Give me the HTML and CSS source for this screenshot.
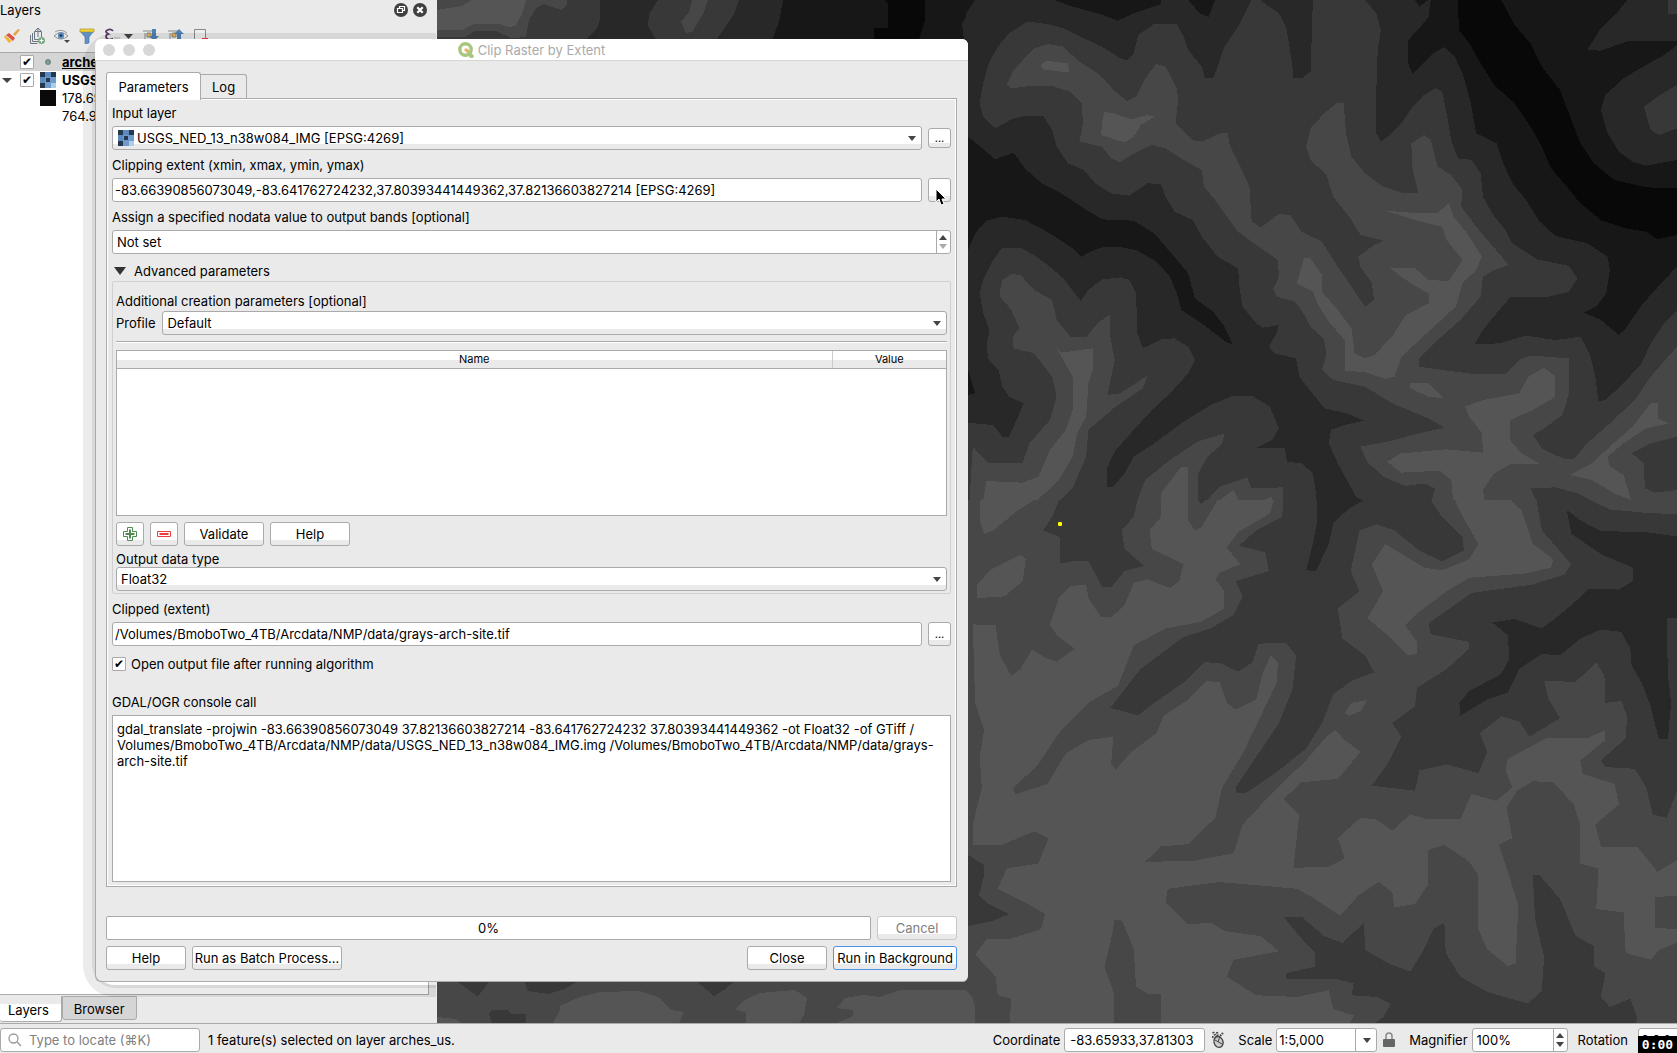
FILE: index.html
```html
<!DOCTYPE html>
<html lang="en">
<head>
<meta charset="utf-8">
<title>Clip Raster by Extent</title>
<link rel="stylesheet" href="styles.css">
</head>
<body>
<svg class="defs" aria-hidden="true">
  <symbol id="raster" viewBox="0 0 16 16"><path fill="#6f9bcc" d="M0 0h16v16H0z"/><path fill="#26384c" d="M0 0h5v5H0zM11 0h5v5h-5zM6 6h4v4H6zM0 11h5v5H0z"/><path fill="#aecbe8" d="M11 11h5v5h-5z"/><path fill="#4f7fb5" d="M5 0h6v5H5zM0 5h5v6H0z" opacity=".6"/></symbol>
</svg>
<div class="workspace">
  <aside class="dock">
    <header class="dock-head">
      <h2>Layers</h2>
      <button class="round" aria-label="Float panel"><svg viewBox="0 0 14 14"><circle cx="7" cy="7" r="7" fill="#404040"/><path d="M5.500 5V3.500h5v4H9M3.500 5.500h5v4h-5z" fill="none" stroke="#fff" stroke-width="1.200"/></svg></button>
      <button class="round" aria-label="Close panel"><svg viewBox="0 0 14 14"><circle cx="7" cy="7" r="7" fill="#404040"/><path d="M4.300 4.300l5.400 5.400M9.700 4.300l-5.400 5.400" stroke="#fff" stroke-width="2.200"/></svg></button>
    </header>
    <div class="tools">
      <button aria-label="Open layer styling"><svg viewBox="0 0 16 16"><path d="M9 6l5-5 2 1-5 6z" fill="#e8a33d"/><path d="M5 5l6 5-2 3-7-6z" fill="#d9534a"/><path d="M1 7l7 6-3 2-5-6z" fill="#f0b63c"/></svg></button>
      <button aria-label="Add group"><svg viewBox="0 0 16 16"><path d="M5.500 3.500h7v8h-7zM3.500 5v8.500h7M1.500 7v8.500h7" fill="none" stroke="#6c7680"/><path d="M9 0v9M9 0l-3 3M9 0l3 3" stroke="#6c7680" fill="none"/><circle cx="12.500" cy="12.500" r="3.500" fill="#7ba884"/><path d="M12.500 10.500v4M10.500 12.500h4" stroke="#fff"/></svg></button>
      <button aria-label="Manage map themes"><svg viewBox="0 0 16 16"><path d="M0 8q7-7 14 0q-7 6-14 0z" fill="#eee" stroke="#8c8c8c"/><circle cx="7" cy="7.500" r="3.200" fill="#5d8fc4"/><circle cx="7" cy="7.500" r="1.300" fill="#234"/><path d="M1 4q6-4 12 1" fill="none" stroke="#999"/><path d="M10 12h6l-3 3z" fill="#444"/></svg></button>
      <button aria-label="Filter legend"><svg viewBox="0 0 16 16"><path d="M1 3h14l-5 6v6l-4 1V9z" fill="#5f91c6" stroke="#456f9c" stroke-width=".6"/><path d="M1 1h14v3H1z" fill="#f2d532" stroke="#99852a" stroke-width=".6"/></svg></button>
      <button class="menu" aria-label="Filter by expression"><svg viewBox="0 0 30 16"><path d="M9 3Q7 .5 3.500 2t1 4Q1 7 2.500 10T9 10.500" fill="none" stroke="#5a3a68" stroke-width="1.800"/><path d="M10 9h6v6h-6z" fill="#ccc"/><path d="M20 6h9l-4.500 5z" fill="#444"/></svg></button>
      <button aria-label="Expand all"><svg viewBox="0 0 16 16"><path d="M0 3h10M2 5v11M4 5h4v4H4z" stroke="#888" fill="#f3b53d"/><path d="M9 1h4v7h3l-5 5-5-5h3z" fill="#4e81b4"/></svg></button>
      <button aria-label="Collapse all"><svg viewBox="0 0 16 16"><path d="M0 3h10M2 5v11M4 5h4v4H4z" stroke="#888" fill="#f3b53d"/><path d="M9 14V6H6l5-5 5 5h-3v8z" fill="#4e81b4"/></svg></button>
      <button aria-label="Remove layer"><svg viewBox="0 0 16 16"><path d="M1.500 1.500h11v11h-11z" fill="#eee" stroke="#888"/><path d="M9 10h6v3H9z" fill="#e5383b"/></svg></button>
    </div>
    <ul class="tree">
      <li class="selected"><span class="twig"></span><input type="checkbox" checked aria-label="arches_us"><svg class="sym" viewBox="0 0 16 16"><circle cx="8" cy="8" r="2.500" fill="#7b9a98" stroke="#6a7f80"/></svg><b><u>arches_us</u></b></li>
      <li><span class="twig open"></span><input type="checkbox" checked aria-label="USGS_NED_13"><svg class="sym"><use href="#raster"/></svg><b>USGS_NED_13</b></li>
      <li class="leaf"><span class="swatch black"></span>178.695</li>
      <li class="leaf"><span class="swatch"></span>764.944</li>
    </ul>
    <nav class="dock-tabs"><button class="on">Layers</button><button>Browser</button></nav>
    <div class="shade"></div>
  </aside>

  <main class="map">
    <svg viewBox="437 0 1240 1023" preserveAspectRatio="xMinYMin slice" shape-rendering="crispEdges">
      <path class="l3" d="M437 0h1240v1023H437z"/>
      <!-- northern strip -->
      <path class="l4" d="M437 0H567V4L562 10L555 8L544 4L536 8L529 20L526 37L511 38L496 31H475L465 37H437z"/>
      <path class="l5" d="M437 10L462 6L472 0H526L522 14L515 26L508 27L500 24H474L462 30H437z"/>
      <path class="l2" d="M600 0H658L649 14L648 26L656 40H586L597 28L600 20zM739 0H968V40H716L726 26L734 14z"/>
      <path class="l4" d="M692 0H708L704 12L697 24L692 32L686 33L681 22L689 12z"/>
      <path class="l1" d="M783 0H968V14L962 24L964 40H772L779 22z"/>
      <path class="l0" d="M884 0H925V20L919 40H874V28H888V4z"/>
      <!-- southern strip -->
      <path class="l4" d="M437 975H970V1023H437z"/>
      <path class="l5" d="M553 1023L560 1010V1006L580 997L600 992L640 991L660 998L671 1010L684 1012L679 1023zM746 1023V1013L735 1009L745 1000L760 993L795 990L807 998L804 1015L799 1023zM837 1023L853 1016V1010L837 1008L845 998L863 995L880 997L900 990H968V1023zM437 1017L455 1019L462 1023H437z"/>
      <path class="l3" d="M455 980H490L483 990L477 996L466 988zM524 980H580L565 989L548 994L528 991zM695 980H736L724 990L714 996zM489 1014L492 1010H508L511 1014H526V1023H492z"/>
      <!-- upper relief sheet -->
      <svg x="966" y="0" width="711" height="501" viewBox="0 0 1568 1503" preserveAspectRatio="none">
        <path class="l3" d="M0 0h1568v1503H0z"/>
        <path class="l2" d="M0 0L630 0L600 80L570 140L555 200L545 235L527 235L520 200L490 150L480 110L465 72L415 72L380 105L370 160L355 182L340 175L300 140L260 115L215 85L180 72L135 65L95 100L70 140L50 190L38 250L30 310L38 350L65 385L100 358L130 347L170 347L190 390L200 440L225 490L260 510L285 550L320 580L360 587L400 550L430 552L440 590L460 635L500 660L520 710L555 770L600 805L603 860L610 920L640 970L655 983L690 975L685 1000L668 1040L680 1060L728 1075L735 1130L770 1190L790 1225L840 1240L878 1262L835 1275L805 1290L800 1330L820 1390L840 1440L860 1490L878 1505L840 1525L828 1560L775 1560L772 1480L765 1420L740 1390L708 1385L703 1345L640 1343L675 1320L690 1285L670 1220L630 1187L590 1187L540 1215L480 1265L410 1335L370 1370L350 1420L325 1460L312 1460L312 1400L330 1350L370 1290L410 1230L450 1180L490 1120L505 1080L490 1040L460 1015L430 1018L390 1045L378 1000L375 880L360 840L340 832L300 838L270 870L253 903L240 880L215 835L180 795L150 765L120 743L80 743L60 780L38 840L30 880L38 940L52 990L45 1040L50 1080L72 1110L80 1160L95 1190L127 1210L115 1250L95 1310L80 1310L60 1275L0 1268z"/>
        <path class="l2" d="M648 0L765 0L760 215L740 235L722 233L718 180L706 80L690 40L660 12zM880 0L905 40L915 90L908 150L905 270L905 400L915 425L930 410L960 370L985 320L1010 285L1035 265L1050 275L1060 340L1070 420L1085 475L1115 480L1135 520L1140 590L1165 650L1190 690L1205 730L1260 778L1330 798L1348 835L1330 875L1285 890L1200 892L1170 940L1140 990L1122 1033L1175 1030L1235 1007L1300 1020L1355 1010L1375 1060L1388 1130L1395 1205L1410 1200L1450 1150L1490 1090L1510 1030L1540 970L1568 930L1568 0z"/>
        <path class="l1" d="M195 0L230 18L290 40L335 62L370 40L430 12L430 0zM490 0L515 40L535 50L545 15L550 0zM0 0L20 0L0 40zM990 0L1020 0L1000 20zM5 410L40 450L65 478L105 458L130 505L165 548L210 580L260 625L300 658L370 662L415 700L450 755L490 820L505 895L545 935L570 980L588 1032L575 1028L530 980L475 930L465 880L450 830L420 785L375 750L345 742L300 742L270 758L255 770L235 745L185 700L130 660L80 650L45 662L20 700L5 750zM5 1110L20 1180L5 1185z"/>
        <path class="l1" d="M1025 0L1020 50L1000 85L975 120L975 190L985 222L1000 200L1030 160L1055 142L1078 170L1095 220L1112 300L1125 400L1170 430L1185 490L1205 550L1235 600L1265 665L1300 708L1370 730L1415 770L1420 810L1412 880L1390 920L1362 938L1400 960L1440 1005L1455 985L1490 915L1540 840L1568 800L1568 0z"/>
        <path class="l2" d="M1458 0L1435 40L1400 85L1370 150L1400 152L1460 123L1568 123L1568 0zM1568 135L1540 165L1500 195L1450 235L1410 285L1400 330L1415 400L1440 455L1470 485L1500 497L1540 487L1568 480z"/>
        <path class="l3" d="M1568 255L1525 290L1495 320L1510 390L1530 405L1568 385zM1548 0h20v42h-20z"/>
        <path class="l0" d="M1085 0L1087 90L1110 130L1135 190L1165 255L1210 310L1245 380L1270 440L1290 505L1325 560L1355 610L1400 660L1455 685L1500 695L1525 718L1568 705L1568 565L1500 562L1430 540L1385 490L1355 430L1335 360L1310 270L1270 200L1245 130L1210 75L1180 0z"/>
        <path class="l4" d="M90 255L105 210L150 145L180 132L215 140L245 180L290 220L330 275L355 303L375 290L395 235L420 192L440 200L465 265L468 300L462 370L500 420L520 425L560 400L578 397L580 430L605 500L625 560L630 665L650 682L690 642L715 645L740 695L785 725L815 790L850 860L880 920L900 900L895 850L870 800L865 770L900 735L922 722L870 705L845 650L810 590L795 525L760 480L750 440L760 385L790 340L820 307L833 310L838 400L850 470L880 520L920 560L960 578L998 578L985 510L982 430L1010 405L1025 420L1040 500L1070 525L1095 570L1092 620L1125 680L1150 720L1197 795L1165 810L1140 830L1135 890L1090 960L1040 1020L998 1078L1000 1100L1060 1112L1120 1122L1190 1122L1220 1080L1245 1067L1330 1075L1330 1180L1315 1245L1270 1290L1250 1305L1270 1345L1315 1375L1340 1378L1370 1330L1420 1270L1475 1200L1510 1130L1568 1040L1568 1310L1510 1330L1468 1360L1495 1390L1497 1465L1520 1478L1568 1470L1568 1530L1500 1540L1410 1525L1350 1480L1300 1462L1245 1465L1260 1510L1265 1560L1040 1560L1025 1510L1035 1465L1010 1450L970 1458L920 1430L885 1385L870 1340L930 1325L1000 1300L1055 1283L1020 1255L940 1210L880 1160L810 1140L785 1110L795 1060L790 1020L760 980L740 930L725 905L685 890L678 865L690 830L688 780L640 735L600 695L570 640L555 610L525 560L520 510L480 480L440 445L410 435L370 460L340 487L320 475L300 440L250 425L258 370L255 310L230 275L190 258L140 258L100 265z"/>
        <path class="l4" d="M75 870L80 840L100 822L120 825L150 870L190 900L200 960L230 1010L265 1012L290 970L318 942L318 1010L328 1080L312 1185L340 1180L400 1127L390 1165L330 1220L270 1290L265 1370L235 1465L195 1520L185 1560L5 1560L15 1340L50 1390L125 1388L140 1330L185 1260L200 1190L190 1130L150 1060L105 1045L103 1010L118 985L100 930L75 890zM365 1560L378 1500L395 1440L450 1380L510 1325L570 1300L565 1330L530 1375L512 1420L512 1500L525 1510L560 1460L620 1432L630 1465L700 1462L697 1560z"/>
        <path class="l5" d="M165 198L175 182L225 190L228 218L170 208zM300 370L305 337L320 338L365 358L400 345L415 350L385 375L370 410L350 427L320 415L298 405zM730 850L745 775L760 775L785 825L785 875L820 930L850 985L857 1060L880 1075L900 1065L940 1010L970 945L1020 910L1020 880L980 850L935 805L990 805L1020 840L1065 843L1095 780L1060 720L1050 680L990 660L925 632L1000 640L1040 638L1065 610L1075 650L1105 700L1138 770L1125 810L1095 850L1080 920L1040 970L1000 1020L960 1070L945 1130L925 1137L880 1117L835 1112L835 1020L800 965L775 910L765 875zM980 1150L1020 1150L1055 1195L1020 1190L980 1165z"/>
        <path class="l5" d="M1100 1220L1140 1200L1220 1180L1240 1130L1275 1103L1300 1130L1300 1190L1250 1230L1200 1260L1200 1320L1225 1360L1268 1393L1200 1393L1165 1420L1140 1470L1145 1510L1185 1498L1225 1530L1230 1560L1095 1560L1075 1510L1070 1440L1045 1412L960 1418L928 1385L960 1360L1060 1348L1140 1358L1138 1300L1110 1250zM1332 1425L1380 1390L1420 1340L1470 1280L1510 1210L1525 1210L1525 1255L1550 1270L1500 1285L1450 1330L1415 1370L1420 1400L1450 1425L1467 1500L1430 1480L1380 1440zM200 1045L210 1058L280 1045L280 1110L270 1150L265 1250L245 1300L235 1370L205 1440L150 1510L80 1560L30 1560L45 1443L125 1448L160 1430L185 1350L220 1290L235 1230L235 1130L215 1080zM425 1560L430 1480L475 1400L490 1400L490 1560zM535 1560L560 1500L590 1470L605 1510L640 1510L675 1490L675 1530L640 1560z"/>
      </svg>
      <!-- lower relief sheet -->
      <svg x="966" y="500" width="711" height="523" viewBox="0 0 1568 1547" preserveAspectRatio="none">
        <path class="l4" d="M0 0h1568v1568H0z"/>
        <path class="l3" d="M205 0L190 50L170 90L207 110L207 188L240 180L270 182L290 230L300 258L320 258L350 210L393 195L350 145L343 90L370 50L378 0zM512 0L520 12L527 0zM700 0L697 50L640 90L602 135L660 155L668 210L595 240L610 285L590 340L540 380L480 405L430 455L385 500L350 560L318 615L380 637L410 605L480 540L525 480L560 482L600 508L632 480L645 425L705 422L728 460L720 560L690 660L650 740L595 850L597 868L620 865L690 800L750 735L785 660L810 575L850 535L900 510L880 460L830 410L820 320L868 270L848 210L868 90L905 72L945 90L1000 150L1050 182L1098 150L1095 110L1050 50L1025 0z"/>
        <path class="l3" d="M1258 0L1270 90L1335 190L1320 220L1250 250L1115 275L1020 365L1025 397L1110 420L1110 440L1060 500L995 555L990 610L940 660L960 700L930 780L895 845L990 860L1000 800L1060 782L1130 808L1150 745L1133 690L1180 640L1220 655L1243 700L1310 645L1285 590L1275 535L1345 538L1390 480L1408 520L1410 600L1445 595L1458 640L1455 705L1400 770L1410 790L1475 795L1500 850L1515 930L1545 940L1568 860L1568 42L1500 38L1420 28L1375 0zM5 1050L40 1080L40 1110L28 1170L50 1195L95 1225L60 1245L5 1260z"/>
        <path class="l3" d="M700 1232L740 1232L790 1290L830 1310L878 1250L880 1330L930 1370L980 1395L1010 1330L1030 1270L1055 1250L1058 1340L1090 1410L1150 1455L1240 1490L1270 1450L1275 1350L1255 1240L1250 1110L1265 1110L1310 1180L1345 1290L1385 1320L1385 1380L1410 1400L1400 1470L1420 1500L1465 1475L1480 1530L1475 1568L880 1568L920 1530L937 1490L905 1470L850 1465L855 1430L820 1418L705 1418L705 1400L770 1380L770 1340L735 1290z"/>
        <path class="l2" d="M775 0L775 60L765 130L750 208L772 210L800 130L810 70L840 30L878 0zM1325 30L1355 60L1400 92L1500 95L1568 108L1568 350L1545 350L1548 520L1555 600L1548 708L1528 708L1510 610L1490 540L1468 490L1465 440L1445 390L1400 383L1355 410L1310 460L1270 455L1220 500L1195 570L1150 590L1090 638L1088 600L1110 565L1180 515L1198 470L1195 400L1160 362L1210 352L1270 380L1300 350L1340 305L1375 262L1440 265L1470 240L1470 200L1400 160L1335 100z"/>
        <path class="l5" d="M30 0L150 0L110 35L60 90L40 100L30 60zM25 250L55 205L120 162L132 175L125 240L85 285L25 290zM1078 0L1100 60L1130 130L1110 175L1050 208L1010 200L925 130L895 190L920 270L885 350L930 400L975 460L995 455L995 420L968 370L1000 330L1060 270L1110 230L1230 218L1290 200L1295 175L1250 130L1225 30L1200 0zM835 630L850 600L885 592L870 625L845 638zM0 1450L14 1470L20 1500V1568H0z"/>
        <path class="l5" d="M430 0L430 50L405 90L410 145L480 190L470 240L450 260L400 235L370 245L350 310L320 348L297 345L270 290L265 250L230 255L205 290L185 370L200 400L240 440L200 478L180 470L145 443L120 500L100 520L75 460L65 370L15 368L20 600L40 680L30 760L35 850L15 960L15 1020L80 1020L150 980L182 1000L160 1075L90 1090L70 1150L130 1190L175 1225L165 1270L100 1297L45 1300L20 1345L65 1410L70 1465L100 1475L95 1568L327 1568L327 1460L305 1380L320 1300L328 1240L345 1245L370 1330L375 1440L400 1460L430 1460L430 1568L840 1568L855 1525L810 1505L800 1450L730 1470L640 1465L575 1410L590 1360L690 1335L650 1290L570 1275L540 1250L490 1255L440 1190L445 1150L560 1130L730 1150L770 1180L825 1230L865 1170L910 1130L940 1160L945 1205L990 1195L1018 1140L1020 1035L1055 1020L1110 1070L1130 1110L1130 1270L1150 1330L1195 1378L1212 1370L1218 1200L1195 1100L1175 1020L1205 1000L1192 910L1215 860L1250 832L1295 835L1340 900L1355 960L1355 1075L1395 1090L1390 1210L1450 1220L1455 1340L1510 1360L1530 1330L1568 1310L1568 1270L1520 1265L1520 1175L1568 1170L1568 1065L1525 1100L1480 1025L1400 1025L1388 960L1440 900L1430 840L1360 810L1355 770L1410 710L1410 680L1370 705L1280 705L1195 765L1190 800L1205 850L1170 890L1115 870L1090 945L1020 945L980 930L940 978L905 945L870 940L820 1000L835 1060L800 1085L722 1088L735 930L700 885L740 835L820 825L870 745L835 710L815 680L795 700L750 770L680 860L610 960L590 1045L500 1068L395 1070L430 1025L490 1018L550 940L565 850L610 750L650 640L685 540L688 480L672 460L655 510L640 590L595 620L575 600L560 540L530 535L490 590L435 640L420 690L365 745L330 798L320 780L325 700L270 710L220 750L180 840L110 870L103 855L160 780L210 680L275 595L335 550L370 430L440 380L520 360L570 320L570 270L550 235L560 215L605 190L575 140L600 95L670 40L680 0L555 0L520 80L505 90L490 60L490 0z"/>
      </svg>
      <rect x="1058" y="522" width="4" height="4" rx="1" fill="#ff0" shape-rendering="auto"/>
    </svg>
  </main>
</div>

<footer class="status">
  <label class="locator"><svg viewBox="0 0 14 14"><circle cx="5.500" cy="5.500" r="4.500" fill="none" stroke="#999" stroke-width="1.300"/><path d="M9 9l4 4" stroke="#999" stroke-width="1.500"/></svg><input class="field" type="text" placeholder="Type to locate (⌘K)" aria-label="Locator"></label>
  <output>1 feature(s) selected on layer arches_us.</output>
  <label for="coord">Coordinate</label><input id="coord" class="field coord" value="-83.65933,37.81303">
  <button class="plain" aria-label="Toggle extents"><svg viewBox="0 0 16 18"><path d="M4 1l4 6M8 1l1 6M3 6q3 0 5 3M14 2l-4 4" stroke="#444" stroke-width="2.200" stroke-dasharray="1.500 1" fill="none"/><ellipse cx="9.500" cy="11" rx="4.500" ry="5.500" transform="rotate(-20 9.500 11)" fill="#ccc" stroke="#444" stroke-width="1.300"/><path d="M6 9l7 4M11 5l-2 6" stroke="#444"/></svg></button>
  <label for="scale">Scale</label><span class="combo split"><select id="scale"><option>1:5,000</option></select></span>
  <button class="plain lock" aria-label="Lock scale"><svg viewBox="0 0 12 16"><path d="M3 8V4q0-3 3-3t3 3v4" fill="none" stroke="#888" stroke-width="1.500"/><rect y="7" width="12" height="8" rx="1" fill="#666"/></svg></button>
  <label for="mag">Magnifier</label><span class="spin mag"><input id="mag" class="field" value="100%"><i></i></span>
  <label for="rot">Rotation</label><input id="rot" class="field rot" value="0.0 °">
  <span class="clock">0:00</span>
</footer>

<section class="dialog" role="dialog" aria-labelledby="dlg-title">
  <header class="titlebar">
    <span class="lights"><i></i><i></i><i></i></span>
    <svg viewBox="0 0 16 16"><circle cx="7.500" cy="7.500" r="5.700" fill="none" stroke="#a9c67f" stroke-width="3.400"/><path d="M7 7h3l6 7-1 2h-3z" fill="#a9c67f"/><path d="M6.500 6.500h3l1.500 3-1.500 1.500-3-2z" fill="#f0b36a"/></svg>
    <h1 id="dlg-title">Clip Raster by Extent</h1>
  </header>
  <div class="tabs"><button class="on">Parameters</button><button>Log</button></div>
  <form class="page">
    <label for="layer">Input layer</label>
    <div class="line"><span class="combo icon"><svg><use href="#raster"/></svg><select id="layer"><option>USGS_NED_13_n38w084_IMG [EPSG:4269]</option></select></span><button type="button" class="btn dots small">...</button></div>
    <label for="extent">Clipping extent (xmin, xmax, ymin, ymax)</label>
    <div class="line"><input id="extent" class="field" value="-83.66390856073049,-83.641762724232,37.80393441449362,37.82136603827214 [EPSG:4269]"><button type="button" class="btn dots" aria-label="Pick extent"><svg class="pointer" viewBox="0 0 12 18"><path d="M1 1v13l3-3 2 6 3-1-2-5h4z" fill="#000" stroke="#fff" stroke-width="1"/></svg></button></div>
    <label for="nodata">Assign a specified nodata value to output bands [optional]</label>
    <span class="spin low"><input id="nodata" class="field" value="Not set"><i></i></span>
    <button type="button" class="fold">Advanced parameters</button>
    <fieldset class="group">
      <span>Additional creation parameters [optional]</span>
      <div class="profile"><label for="profile">Profile</label><span class="combo"><select id="profile"><option>Default</option></select></span></div>
      <hr>
      <div class="grid"><table><thead><tr><th>Name</th><th class="value">Value</th></tr></thead></table></div>
      <div class="actions"><button type="button" class="btn square" aria-label="Add"><svg viewBox="0 0 14 14"><path d="M4.500.5h5v4h4v5h-4v4h-5v-4h-4v-5h4z" fill="#fff" stroke="#4f8a50"/><path d="M7 2.500v9M2.500 7h9" stroke="#4f8a50" stroke-width="2"/></svg></button><button type="button" class="btn square" aria-label="Remove"><svg viewBox="0 0 14 14"><path d="M.5 4.500h13v5H.5z" fill="#fff" stroke="#e8403c"/><path d="M2.500 7h9" stroke="#e8403c" stroke-width="2"/></svg></button><button type="button" class="btn std">Validate</button><button type="button" class="btn std">Help</button></div>
      <label for="type">Output data type</label>
      <span class="combo"><select id="type"><option>Float32</option></select></span>
    </fieldset>
    <label for="out">Clipped (extent)</label>
    <div class="line"><input id="out" class="field" value="/Volumes/BmoboTwo_4TB/Arcdata/NMP/data/grays-arch-site.tif"><button type="button" class="btn dots">...</button></div>
    <label class="check"><input type="checkbox" checked>Open output file after running algorithm</label>
    <label for="call">GDAL/OGR console call</label>
    <textarea id="call" readonly>gdal_translate -projwin -83.66390856073049 37.82136603827214 -83.641762724232 37.80393441449362 -ot Float32 -of GTiff /
Volumes/BmoboTwo_4TB/Arcdata/NMP/data/USGS_NED_13_n38w084_IMG.img /Volumes/BmoboTwo_4TB/Arcdata/NMP/data/grays-
arch-site.tif</textarea>
  </form>
  <div class="foot"><div class="progress" role="progressbar" aria-valuenow="0">0%</div><button class="btn std" disabled>Cancel</button></div>
  <div class="foot"><button class="btn std">Help</button><button class="btn batch">Run as Batch Process...</button><span class="push"></span><button class="btn std">Close</button><button class="btn run">Run in Background</button></div>
</section>
</body>
</html>
```
FILE: styles.css
```css
* { box-sizing: border-box; }
body {
  margin: 0; height: 100vh; display: flex; flex-direction: column; position: relative; overflow: hidden;
  background: #eaeaea; color: #000; font: 13px/16px Inter, "Liberation Sans", sans-serif;
}
button, input, select, textarea { font: inherit; color: inherit; margin: 0; }
button { background: none; border: 0; padding: 0; }
h1, h2 { margin: 0; font: inherit; }
svg { display: block; }
.defs { position: absolute; width: 0; height: 0; }

/* workspace */
.workspace { flex: 1; min-height: 0; display: flex; border-bottom: 1px solid #aaa; }
.dock { position: relative; overflow: hidden; width: 26vw; flex: none; display: flex; flex-direction: column; margin-right: 1px; }
.dock-head { display: flex; align-items: center; gap: 5px; height: 20px; padding-right: 9px; }
.dock-head h2 { flex: 1; }
.round, .round svg { width: 14px; height: 14px; }
.tools { display: flex; gap: 9px; height: 32px; padding: 8px 0 0 4px; }
.tools button, .tools svg { width: 16px; height: 16px; }
.tools .menu, .tools .menu svg { width: 30px; }
.tree { flex: 1; margin: 0 7px 0 0; padding: 0; list-style: none; background: #fff; border: solid #aaa; border-width: 1px 1px 1px 0; }
.tree li { display: flex; align-items: center; height: 18px; white-space: nowrap; }
.tree .selected { background: #d5d5d5; }
.twig { width: 20px; flex: none; }
.twig.open::before { content: ""; display: block; margin-left: 2px; width: 0; border: solid transparent; border-width: 5px 5px 0; border-top-color: #444; }
.sym { width: 16px; height: 16px; margin: 0 6px; flex: none; }
.leaf { padding-left: 40px; }
.swatch { width: 16px; height: 16px; margin-right: 6px; }
.black { background: #0a0a0a; }
input[type="checkbox"] {
  appearance: none; flex: none; width: 14px; height: 14px; border: 1px solid #aaa; border-radius: 1px; background: #fff;
  display: grid; place-items: center;
}
input[type="checkbox"]:checked::before { content: "✔"; font: 12px/12px "DejaVu Sans", sans-serif; }
.dock-tabs { display: flex; align-items: flex-start; height: 27px; margin-top: 1px; }
.dock-tabs button { padding: 1px 11px 0; height: 24px; background: #d5d5d5; border: 1px solid #aaa; border-radius: 0 0 3px 3px; }
.dock-tabs .on { padding: 2px 12px 0 8px; height: 26px; background: linear-gradient(#eaeaea 8px, #fff 8px); border-width: 0 1px 1px 0; }
.shade { position: absolute; left: 95px; top: 45px; right: -50px; bottom: 38px; border-radius: 20px; box-shadow: 0 0 0 12px rgba(0, 0, 0, .08), 0 0 0 3px rgba(0, 0, 0, .08); pointer-events: none; }
.map { flex: 1; min-width: 0; background: #474747; overflow: hidden; }
.map > svg { width: 100%; height: 100%; }
.l0 { fill: #080808; }
.l1 { fill: #171717; }
.l2 { fill: #282828; }
.l3 { fill: #383838; }
.l4 { fill: #474747; }
.l5 { fill: #555; }

/* controls */
.field { height: 24px; min-width: 0; padding: 0 2px; background: #fff; border: 1px solid #aaa; border-radius: 3px; }
.btn {
  height: 24px; border: 1px solid #aaa; border-radius: 3px; background: linear-gradient(#fff 17px, #eaeaea 17px);
  display: flex; align-items: center; justify-content: center; position: relative; white-space: nowrap;
}
.btn:disabled { color: #808080; border-color: #c8c8c8; }
.std { width: 80px; }
.square { width: 28px; }
.square svg { width: 14px; height: 14px; }
.dots { width: 23px; font-size: 11px; }
.small { height: 20px; background: linear-gradient(#fff 14px, #eaeaea 14px); }
.batch { width: 150px; }
.run { width: 124px; border-color: #4d94e8; }
.combo { position: relative; display: block; flex: 1; }
.combo select {
  appearance: none; width: 100%; height: 24px; display: block; padding: 0 4px; border: 1px solid #aaa; border-radius: 3px;
  background: linear-gradient(#fff 17px, #eaeaea 17px);
}
.combo::after { content: ""; position: absolute; right: 6px; top: 10px; border: solid transparent; border-width: 5px 4px 0; border-top-color: #444; }
.combo.icon select { padding-left: 24px; }
.combo.icon svg { position: absolute; left: 6px; top: 4px; width: 16px; height: 16px; }
.spin { display: flex; position: relative; }
.spin .field { flex: 1; padding: 0 4px; }
.spin i { position: absolute; right: 1px; top: 1px; bottom: 1px; width: 14px; border-left: 1px solid #aaa; }
.spin i::before, .spin i::after { content: ""; position: absolute; left: 2px; border: solid transparent; }
.spin i::before { top: 4px; border-width: 0 4px 5px; border-bottom-color: #444; }
.spin i::after { bottom: 4px; border-width: 5px 4px 0; border-top-color: #444; }
.spin.low i::after { border-top-color: #aaa; }

/* dialog window */
.dialog {
  position: absolute; left: 95px; top: 39px; width: calc(52vw + 1px); padding: 0 11px 12px; display: flex; flex-direction: column;
  background: #eaeaea; border-radius: 6px; box-shadow: inset 1px -1px #aaa;
}
.titlebar {
  display: flex; align-items: center; justify-content: center; gap: 4px; height: 22px; margin: 0 -11px 11px; position: relative;
  background: #fff; border-bottom: 1px solid #d5d5d5; border-radius: 6px 6px 0 0; color: #aaa;
}
.titlebar svg { width: 16px; height: 16px; }
.lights { position: absolute; left: 8px; display: flex; gap: 8px; }
.lights i { width: 12px; height: 12px; border-radius: 50%; background: #d8d8d8; }
.tabs { display: flex; align-items: flex-end; height: 26px; position: relative; }
.tabs button { height: 24px; padding: 1px 11px 0; border: 1px solid #aaa; border-width: 1px 1px 0 0; border-radius: 0 3px 0 0; }
.tabs .on { height: 28px; width: 95px; border-width: 1px 1px 0; border-radius: 3px 3px 0 0; background: #fff; margin-bottom: -2px; }
.page { display: flex; flex-direction: column; border: 1px solid #aaa; box-shadow: inset 1px 1px #fff, inset -1px -1px #fff; padding: 6px 5px 4px; }
.page > label { margin-bottom: 5px; }
.line { display: flex; align-items: center; gap: 6px; margin-bottom: 7px; }
.line .field { flex: 1; }
.pointer { position: absolute; left: 6px; top: 9px; width: 12px; height: 18px; }
.fold { display: flex; align-items: center; gap: 8px; margin: 9px 0 2px 2px; }
.fold::before { content: ""; border: solid transparent; border-width: 8px 6px 0; border-top-color: #333; }
.group { display: flex; flex-direction: column; min-width: 0; margin: 0 0 7px; padding: 11px 3px 2px; border: 1px solid #d0d0d0; border-radius: 2px; }
.group .combo { flex: none; }
.profile { display: flex; align-items: center; gap: 7px; margin-top: 2px; }
.group .profile .combo { flex: 1; }
hr { width: 100%; margin: 6px 0 7px; border: 0; border-top: 1px solid #aaa; border-bottom: 1px solid #fff; }
.grid { height: 166px; background: #fff; border: 1px solid #aaa; }
table { width: 100%; border-collapse: collapse; table-layout: fixed; }
th { height: 17px; padding: 1px 0 0; font-size: 11px; line-height: 15px; font-weight: 400; background: linear-gradient(#fff 9px, #eaeaea 9px); border-bottom: 1px solid #aaa; }
th.value { width: 114px; border-left: 1px solid #ccc; }
.actions { display: flex; gap: 6px; margin: 6px 0 5px; }
.page > .check { display: flex; align-items: center; gap: 5px; margin: 3px 0 22px; }
textarea { display: block; height: 167px; padding: 5px 4px; border: 1px solid #aaa; background: #fff; resize: none; line-height: 16px; white-space: pre; overflow: hidden; }
.foot { display: flex; gap: 6px; margin-top: 6px; }
.page + .foot { margin-top: 29px; }
.progress { flex: 1; height: 24px; line-height: 22px; text-align: center; background: #fff; border: 1px solid #aaa; border-radius: 2px; }
.push { flex: 1; }

/* status bar */
.status { display: flex; align-items: center; height: 29px; padding-top: 2px; position: relative; white-space: nowrap; }
.locator { position: relative; width: 200px; margin-right: 8px; }
.locator svg { position: absolute; left: 8px; top: 5px; width: 14px; height: 14px; }
.locator .field { width: 100%; padding-left: 28px; }
.locator ::placeholder { color: #808080; opacity: 1; }
output { flex: 1; }
.coord { width: 141px; margin: 0 4px 0 4px; padding: 0 5px; }
.plain svg { width: 16px; height: 18px; }
.plain { margin-right: 13px; }
.lock { margin-right: 14px; }
.lock svg { width: 12px; height: 16px; }
.status .split { flex: none; width: 101px; margin: 0 6px 0 4px; }
.split select { padding: 0 2px; background: linear-gradient(#aaa, #aaa) right 20px top 0 / 1px 100% no-repeat #fff; }
.mag { width: 96px; margin: 0 10px 0 4px; }
.mag .field { min-width: 0; width: 100%; }
.rot { width: 60px; margin: 0 -21px 0 10px; }
.clock { position: absolute; right: 0; bottom: 0; width: 39px; height: 17px; background: #000; color: #fff; font: bold 13px/17px "DejaVu Sans Mono", monospace; text-align: center; }
```
